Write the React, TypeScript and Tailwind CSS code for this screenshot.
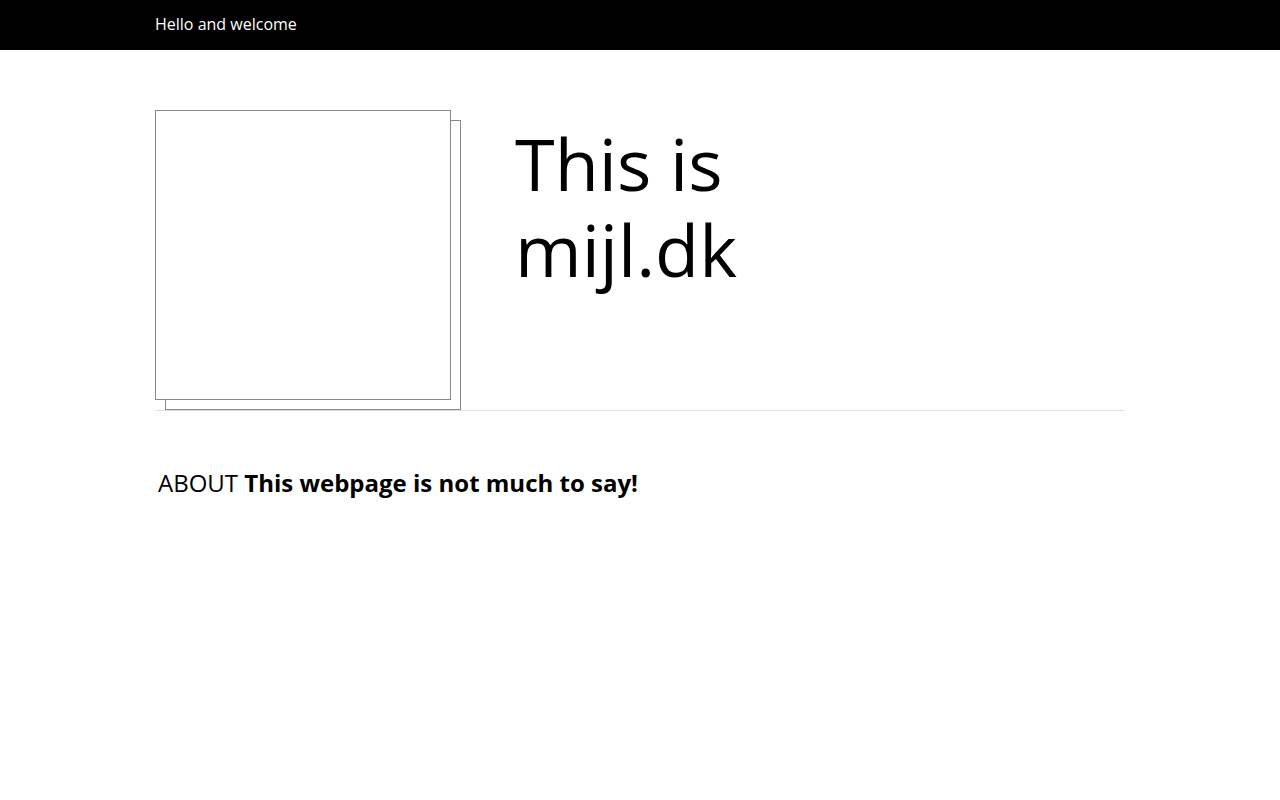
export default function App() {
  return (
    <div className="min-h-screen bg-white text-black" style={{ fontFamily: '"Open Sans", "Liberation Sans", sans-serif' }}>
      <header className="h-[50px] bg-black">
        <div className="mx-auto w-[970px] pt-[12px] text-base leading-6 text-white">Hello and welcome</div>
      </header>

      <main className="mx-auto w-[970px]">
        <section className="flex border-b border-[#e0e0e0] pt-[60px]">
          {/* picture frame with offset shadow box */}
          <div className="relative h-[300px] w-[306px] shrink-0">
            <div className="absolute left-[10px] top-[10px] h-[290px] w-[296px] border border-[#888] bg-white" />
            <div className="absolute left-0 top-0 h-[290px] w-[296px] border border-[#888] bg-white" />
          </div>
          <h1 className="ml-[54px] pt-[10px] text-[72px] font-normal leading-[1.2]">
            <span className="block">This is</span>
            <span className="block">mijl.dk</span>
          </h1>
        </section>

        <section className="px-[3px] pt-[54px]">
          <p className="text-2xl leading-9">
            <span className="font-normal">ABOUT</span> <strong className="font-bold">This webpage is not much to say!</strong>
          </p>
        </section>
      </main>
    </div>
  );
}
